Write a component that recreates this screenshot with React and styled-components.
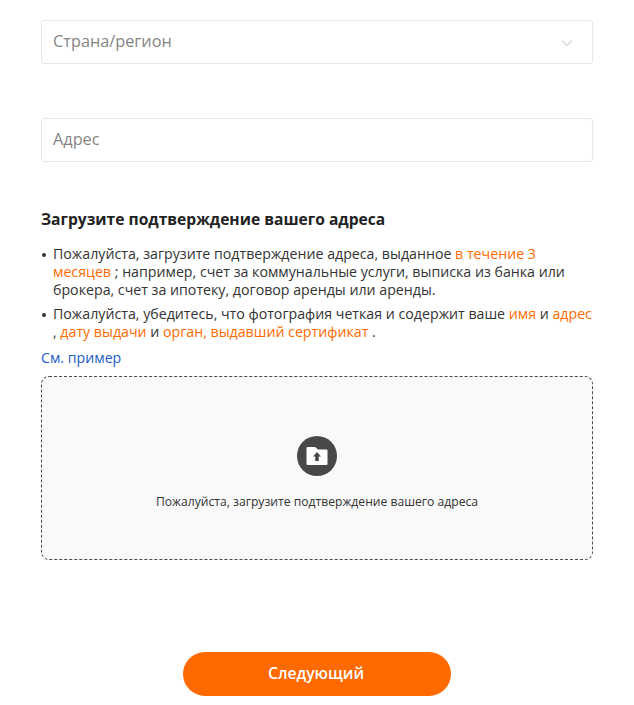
import React from 'react'
import styled, { createGlobalStyle } from 'styled-components'

const GlobalStyle = createGlobalStyle`
  html, body {
    margin: 0;
    padding: 0;
    background: #fff;
  }
  body {
    font-family: 'Open Sans', 'Noto Sans', sans-serif;
    color: #333;
  }
`

const Page = styled.div`
  width: 552px;
  height: 705px;
  margin: 0 0 0 41px;
  padding-top: 20px;
  box-sizing: border-box;
  display: flex;
  flex-direction: column;
`

const Field = styled.div`
  height: 44px;
  box-sizing: border-box;
  border: 1px solid #e6e6e6;
  border-radius: 3px;
  padding: 0 11px 2px;
  margin-bottom: ${({ $gap }) => $gap}px;
  display: flex;
  align-items: center;
  justify-content: space-between;
  font-size: 16.3px;
  color: #858585;
`

const Chevron = styled.svg`
  width: 12px;
  height: 8px;
  margin-right: 8px;
  margin-top: 4px;
  fill: none;
  stroke: #b5b5b5;
  stroke-width: 1;
`

const Title = styled.h2`
  font-size: 15.6px;
  font-weight: 700;
  line-height: 20px;
  color: #222;
  margin: 0 0 16px;
`

const Notes = styled.ul`
  list-style: none;
  margin: 0 0 2px;
  padding: 0;
`

const Note = styled.li`
  position: relative;
  padding-left: 12px;
  font-size: 14.2px;
  line-height: 18px;
  color: #333;
  margin-bottom: 6px;

  &:before {
    content: '';
    position: absolute;
    left: 1px;
    top: 8px;
    width: 4px;
    height: 4px;
    border-radius: 50%;
    background: #333;
  }
`

const Accent = styled.span`
  color: #ff6a00;
`

const Example = styled.a`
  display: block;
  font-size: 14.2px;
  line-height: 18px;
  color: #1a5cc8;
  margin-bottom: 9px;
`

const Dropzone = styled.div`
  height: 184px;
  box-sizing: border-box;
  border: 1px dashed #4a4a4a;
  border-radius: 8px;
  background: #f9f9f9;
  display: flex;
  flex-direction: column;
  align-items: center;
  padding-top: 59px;
`

const UploadCircle = styled.div`
  width: 40px;
  height: 40px;
  border-radius: 50%;
  background: #484848;
  display: flex;
  align-items: center;
  justify-content: center;
  margin-bottom: 18px;
`

const UploadText = styled.div`
  font-size: 12.15px;
  line-height: 16px;
  color: #333;
`

const NextButton = styled.button`
  align-self: center;
  width: 268px;
  height: 44px;
  margin-top: 92px;
  border: none;
  border-radius: 22px;
  background: #ff6a00;
  color: #fff;
  font-family: inherit;
  font-size: 15.7px;
  font-weight: 600;
  padding: 0 2px 2px 0;
`

export default function App() {
  return (
    <>
      <GlobalStyle />
      <Page>
        <Field $gap={54}>
          Страна/регион
          <Chevron viewBox="0 0 12 8">
            <path d="M1 1.5 L6 6.5 L11 1.5" />
          </Chevron>
        </Field>
        <Field $gap={47}>Адрес</Field>
        <Title>Загрузите подтверждение вашего адреса</Title>
        <Notes>
          <Note>
            Пожалуйста, загрузите подтверждение адреса, выданное <Accent>в течение 3 месяцев</Accent> ; например, счет за коммунальные услуги, выписка из банка или брокера, счет за ипотеку, договор аренды или аренды.
          </Note>
          <Note>
            Пожалуйста, убедитесь, что фотография четкая и содержит ваше <Accent>имя</Accent> и <Accent>адрес</Accent> , <Accent>дату выдачи</Accent> и <Accent>орган, выдавший сертификат</Accent> .
          </Note>
        </Notes>
        <Example>См. пример</Example>
        <Dropzone>
          <UploadCircle>
            <svg width="22" height="18" viewBox="0 0 22 18">
              <path
                fill="#fff"
                fillRule="evenodd"
                d="M0.5 1 A1 1 0 0 1 1.5 0 H9 L12 2.5 H20.5 A1 1 0 0 1 21.5 3.5 V17 A1 1 0 0 1 20.5 18 H1.5 A1 1 0 0 1 0.5 17 Z M11 5 L7 9.5 H9.2 V14 H12.8 V9.5 H15 Z"
              />
            </svg>
          </UploadCircle>
          <UploadText>Пожалуйста, загрузите подтверждение вашего адреса</UploadText>
        </Dropzone>
        <NextButton>Следующий</NextButton>
      </Page>
    </>
  )
}
